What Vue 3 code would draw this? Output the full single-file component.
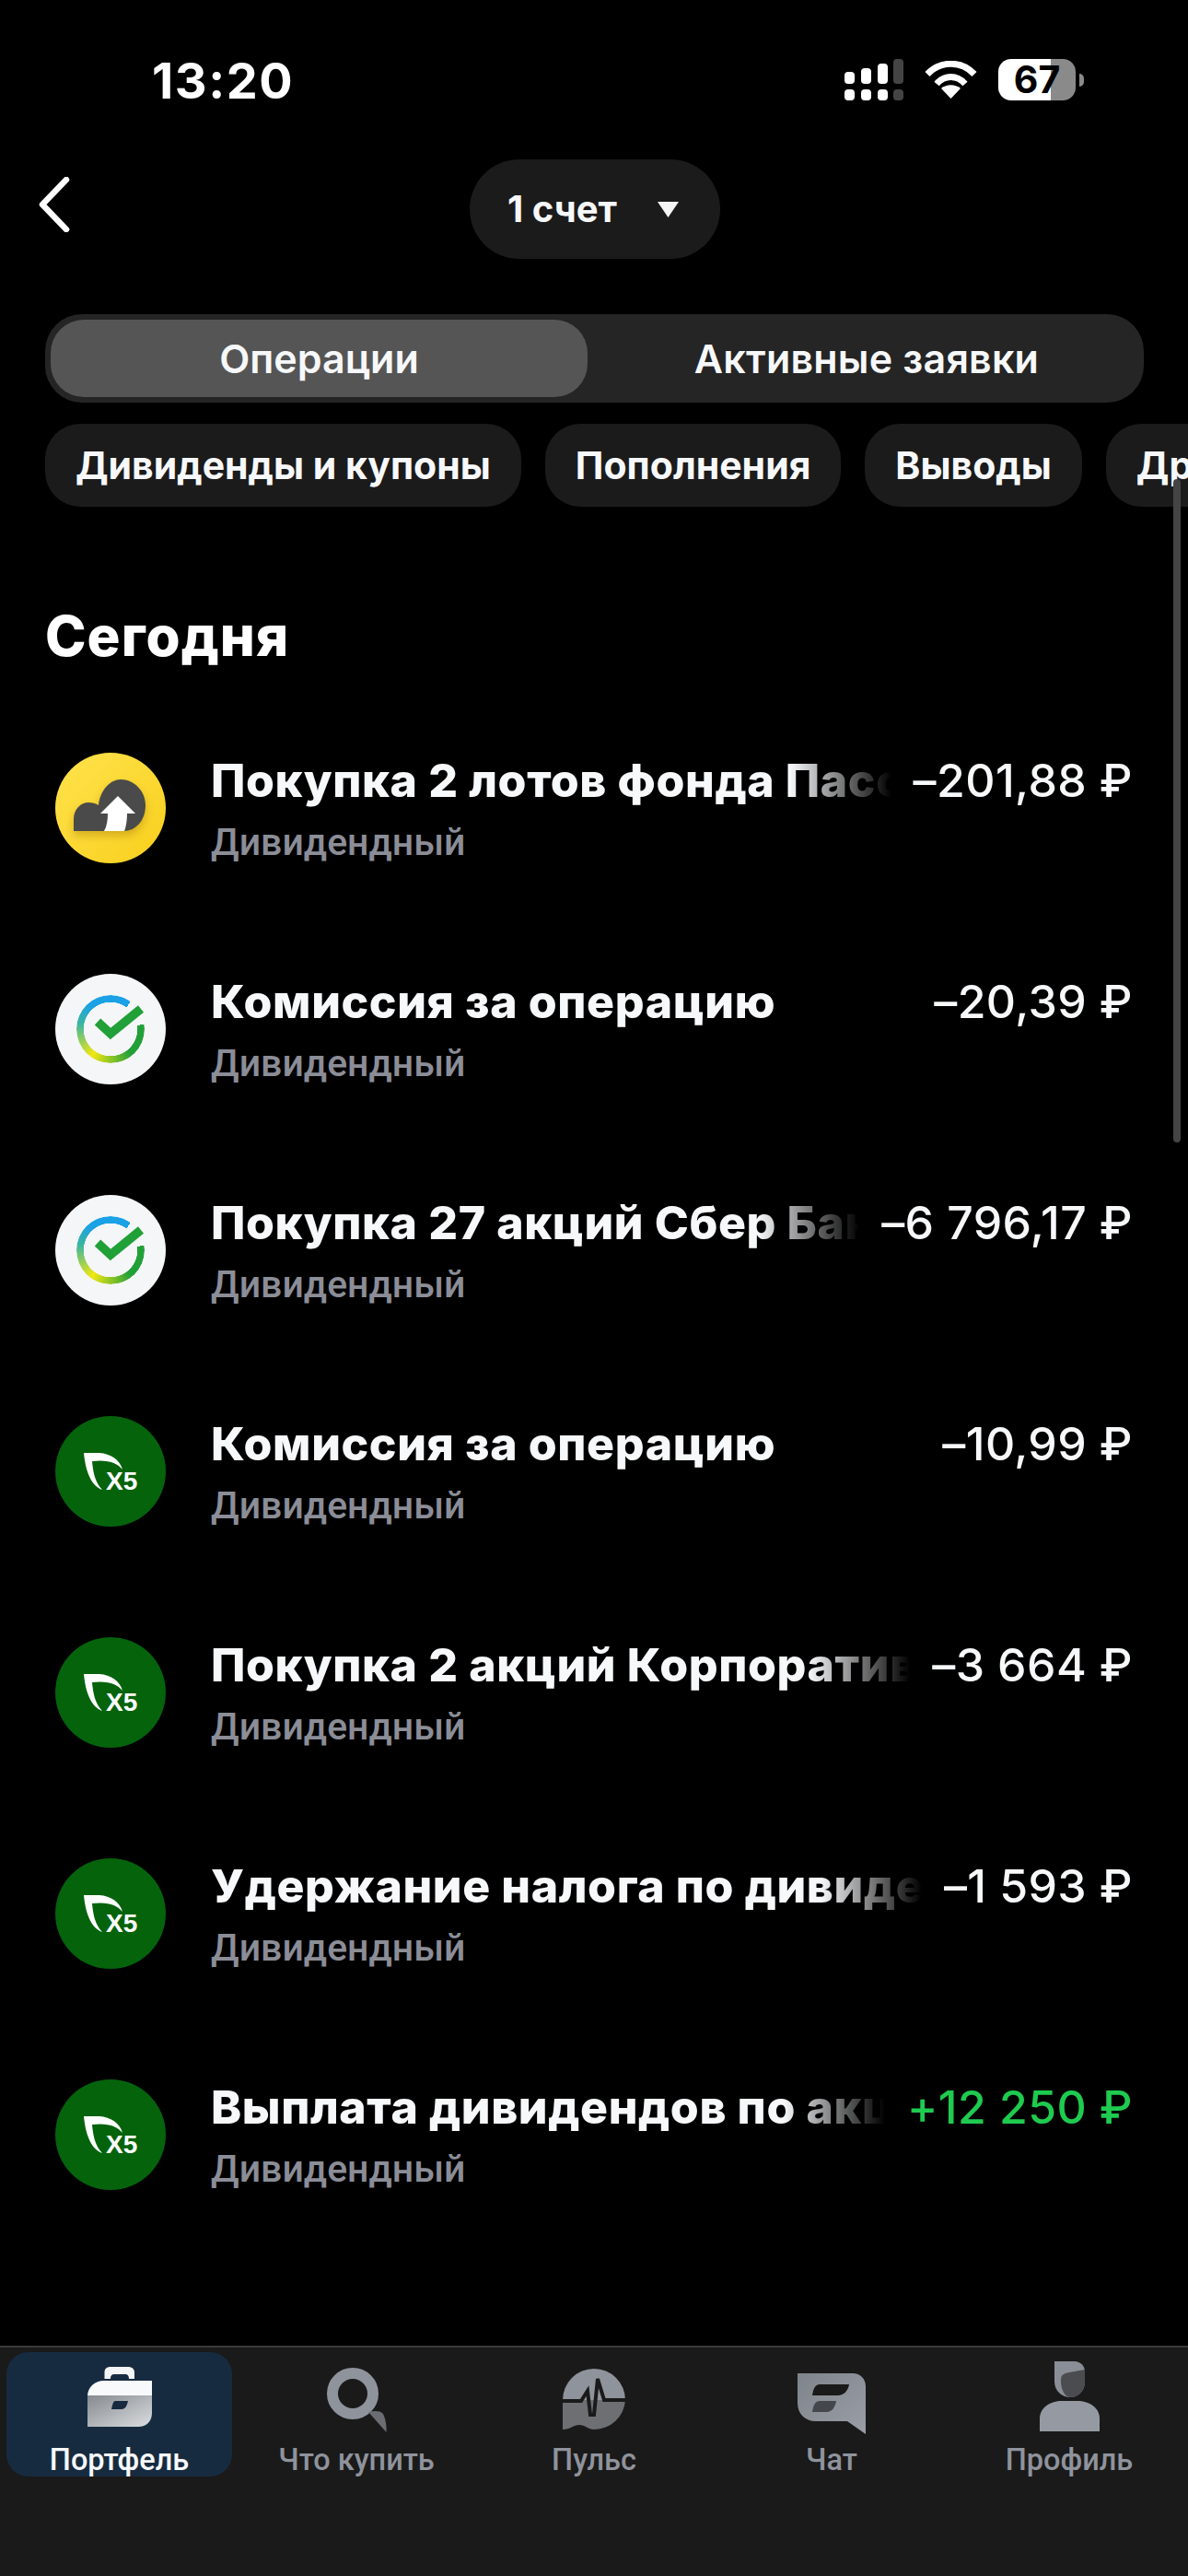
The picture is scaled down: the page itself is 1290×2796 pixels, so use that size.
<script setup>
const chips = ['Дивиденды и купоны', 'Пополнения', 'Выводы', 'Другое']
const rows = [
  { logo: 'cloud', title: 'Покупка 2 лотов фонда Пассивный доход', amount: '–201,88 ₽' },
  { logo: 'sber', title: 'Комиссия за операцию', amount: '–20,39 ₽', full: true },
  { logo: 'sber', title: 'Покупка 27 акций Сбер Банк', amount: '–6 796,17 ₽' },
  { logo: 'x5', title: 'Комиссия за операцию', amount: '–10,99 ₽', full: true },
  { logo: 'x5', title: 'Покупка 2 акций Корпоративный центр', amount: '–3 664 ₽' },
  { logo: 'x5', title: 'Удержание налога по дивидендам', amount: '–1 593 ₽' },
  { logo: 'x5', title: 'Выплата дивидендов по акциям', amount: '+12 250 ₽', plus: true },
]
const tabs = [
  { id: 'case', label: 'Портфель', active: true },
  { id: 'search', label: 'Что купить' },
  { id: 'pulse', label: 'Пульс' },
  { id: 'chat', label: 'Чат' },
  { id: 'user', label: 'Профиль' },
]
</script>

<template>
  <div class="screen">
    <header class="status">
      <span class="time">13:20</span>
      <div class="sys">
        <svg class="signal" width="64" height="45" viewBox="0 0 64 45">
          <g fill="#fff">
            <rect x="0" y="14" width="11" height="13" rx="4" />
            <rect x="18" y="10" width="11" height="17" rx="4" />
            <rect x="36" y="5" width="11" height="22" rx="4" />
            <rect x="0" y="33" width="11" height="12" rx="4" />
            <rect x="18" y="33" width="11" height="12" rx="4" />
            <rect x="36" y="33" width="11" height="12" rx="4" />
          </g>
          <g fill="#444">
            <rect x="53" y="0" width="11" height="27" rx="4" />
            <rect x="53" y="33" width="11" height="12" rx="4" />
          </g>
        </svg>
        <svg class="wifi" width="57" height="41" viewBox="0 0 57 41">
          <path d="M3 14.5C17-.5 40-.5 54 14.5" fill="none" stroke="#fff" stroke-width="7" />
          <path d="M13 25C22 15 35 15 44 25" fill="none" stroke="#fff" stroke-width="7" />
          <path d="M28.5 41L18 30C24 25 33 25 39 30Z" fill="#fff" />
        </svg>
        <div class="battery"><span>67</span></div>
        <i class="nub"></i>
      </div>
    </header>

    <nav class="topnav">
      <svg class="back" width="34" height="60" viewBox="0 0 34 60">
        <path d="M30 3L4 30L30 57" fill="none" stroke="#fff" stroke-width="6.5" stroke-linecap="round" stroke-linejoin="round" />
      </svg>
      <button class="account">
        <span>1 счет</span>
        <svg width="25" height="18" viewBox="0 0 25 18"><path d="M1 1H24L12.5 18Z" fill="#f5f5f5" /></svg>
      </button>
    </nav>

    <div class="segment">
      <div class="seg on">Операции</div>
      <div class="seg rest">Активные заявки</div>
    </div>

    <div class="chips">
      <div v-for="c in chips" :key="c" class="chip">{{ c }}</div>
    </div>

    <h2 class="day">Сегодня</h2>

    <ul class="list">
      <li v-for="(r, i) in rows" :key="i" class="row">
        <div class="logo" :class="r.logo">
          <svg v-if="r.logo === 'cloud'" width="120" height="120" viewBox="0 0 120 120">
            <g class="cloudmark">
              <path d="M20 85V72C20 61 28 54 36 54C40 54 44 55 47 57C49 40 60 29 71 29C86 29 98 42 98 57C98 73 88 85 74 85Z" fill="#4a4a4a" />
              <path d="M68 47L87 66H78C78 73 77 80 75 85H53C56 80 57 73 57 66H49Z" fill="#fff" />
            </g>
          </svg>
          <template v-else-if="r.logo === 'sber'">
            <div class="ring"></div>
            <svg class="tick" width="120" height="120" viewBox="0 0 120 120">
              <path d="M46 52L60 65L93 38" fill="none" stroke="#21a038" stroke-width="9.5" />
            </svg>
          </template>
          <svg v-else width="120" height="120" viewBox="0 0 120 120">
            <path d="M31 40L48 40C60 41 70 47 73 58C67 51 58 47 40 49C41 60 43 72 51 80C40 76 33 62 31 40Z" fill="#fff" />
            <text x="55" y="80" class="x5">X5</text>
          </svg>
        </div>
        <div class="texts">
          <div class="title" :class="{ fade: !r.full }">{{ r.title }}</div>
          <div class="sub">Дивидендный</div>
        </div>
        <div class="amount" :class="{ plus: r.plus }">{{ r.amount }}</div>
      </li>
    </ul>

    <footer class="tabbar">
      <div v-for="t in tabs" :key="t.id" class="tab" :class="[t.id, { active: t.active }]">
        <div class="icon">
          <svg v-if="t.id === 'case'" width="70" height="66" viewBox="0 0 70 66">
            <defs>
              <linearGradient id="caseg" x1="0" y1="0" x2="1" y2="1">
                <stop offset="0" stop-color="#858a90" />
                <stop offset="1" stop-color="#dcdee0" />
              </linearGradient>
            </defs>
            <path d="M18.5 13V6C18.5 2 21 0 25 0H44C48 0 51 2 51 6V13H45C45 9 43 8 41 8H29C27 8 25 9 25 13Z" fill="#f4f5f6" />
            <path d="M0 32C0 22 8 15 18 15H70V31H0Z" fill="#f8f9fa" />
            <path d="M0 31H70V50C70 59 64 65 55 65H0Z" fill="url(#caseg)" />
            <path d="M30 37H44C43 42 41 46 37 46H26C27 41 28 37 30 37Z" fill="#172b40" />
          </svg>
          <svg v-else-if="t.id === 'search'" width="70" height="74" viewBox="0 0 70 74">
            <circle cx="31" cy="30" r="22" fill="none" stroke="#8f939c" stroke-width="12" />
            <path d="M48 50C54 49 60 48 64 52C67 58 68 66 67.500 72Z" fill="#6a6d72" />
          </svg>
          <svg v-else-if="t.id === 'pulse'" width="68" height="68" viewBox="0 0 68 68">
            <path d="M0 36A34 34 0 0 1 68 36Z" fill="#8f939c" />
            <path d="M0 36H68A34 34 0 0 1 34 68C28 68 24 63 18 63C12 63 8 68 0 68Z" fill="#6d6f73" />
            <path d="M0 37H20L27 26L30 52H34L38 13L45 36H68" fill="none" stroke="#1a1a1a" stroke-width="4" />
          </svg>
          <svg v-else-if="t.id === 'chat'" width="74" height="66" viewBox="0 0 74 66">
            <defs>
              <linearGradient id="chatg" x1="0" y1="0" x2="1" y2="1">
                <stop offset="0" stop-color="#7f838a" />
                <stop offset="1" stop-color="#9a9ea6" />
              </linearGradient>
            </defs>
            <path d="M0 0H60C68 0 74 6 74 14V66L54 52H20C8 52 0 44 0 32Z" fill="url(#chatg)" />
            <path d="M24 12H56C55 19 50 24 44 24H16C17 17 19 12 24 12Z" fill="#1a1a1a" />
            <path d="M24 30H42C41 37 37 42 32 42H16C17 35 19 30 24 30Z" fill="#44474b" />
          </svg>
          <svg v-else width="65" height="76" viewBox="0 0 65 76">
            <path d="M16 0H38C44 0 49 5 49 11V22C49 32 42 39 33 39C24 39 16 32 16 22Z" fill="#8a8e96" />
            <path d="M23 22V20C23 14 27 13 32 12L49 9V22C49 32 42 39 33 39C27 39 23 30 23 22Z" fill="#4a4c50" />
            <path d="M0 76V62C0 50 12 43 24 43H41C53 43 65 50 65 62V76Z" fill="#959aa2" />
          </svg>
        </div>
        <span class="label">{{ t.label }}</span>
      </div>
    </footer>

    <div class="scrollbar"></div>
  </div>
</template>

<style scoped>
.screen {
  position: relative;
  width: 1290px;
  height: 2796px;
  overflow: hidden;
  display: flex;
  flex-direction: column;
  background: #000;
  color: #f7f8fa;
  font-family: Inter, "Noto Sans", sans-serif;
}
.status {
  height: 173px;
  flex: none;
  display: flex;
  align-items: flex-start;
  justify-content: space-between;
  padding: 0 113px 0 165px;
}
.time {
  margin-top: 58px;
  font: 700 54px/60px Inter, sans-serif;
  letter-spacing: 1.5px;
  color: #fff;
}
.sys {
  margin-top: 64px;
  display: flex;
  align-items: flex-start;
}
.wifi { margin: 2px 23px 0 23px; }
.battery {
  width: 84px;
  height: 45px;
  border-radius: 14px;
  display: flex;
  align-items: center;
  justify-content: center;
  background: linear-gradient(to right, #fff 57px, #8a8a8a 57px);
  color: #000;
  font: 700 41px/45px Inter, sans-serif;
}
.nub {
  width: 5px;
  height: 14px;
  margin: 16px 0 0 4px;
  border-radius: 0 7px 7px 0;
  background: #8a8a8a;
}
.topnav {
  flex: none;
  display: grid;
  grid-template-columns: 510px 272px;
  height: 108px;
}
.back { align-self: center; margin: 0 0 10px 42px; }
.account {
  border: 0;
  padding: 0 44px 0 41px;
  display: flex;
  align-items: center;
  justify-content: space-between;
  height: 108px;
  border-radius: 54px;
  background: #1b1b1b;
  color: #f7f8fa;
  font: 700 40px/1 Inter, sans-serif;
}
.segment {
  flex: none;
  display: flex;
  margin: 60px 48px 0 49px;
  height: 96px;
  padding: 6px;
  box-sizing: border-box;
  border-radius: 40px;
  background: #252525;
}
.seg {
  flex: 1;
  display: flex;
  align-items: center;
  justify-content: center;
  border-radius: 36px;
  font: 600 43px/1 Inter, sans-serif;
}
.seg.rest { padding-left: 8px; letter-spacing: .2px; }
.seg.on {
  flex: 0 0 583px;
  background: #555;
}
.chips {
  flex: none;
  display: flex;
  gap: 26px;
  margin-top: 23px;
  padding-left: 49px;
  overflow: hidden;
}
.chip {
  flex: none;
  height: 90px;
  padding: 0 33px;
  display: flex;
  align-items: center;
  border-radius: 38px;
  background: #1b1b1b;
  font: 700 41px/1 Inter, sans-serif;
}
.day {
  flex: none;
  margin: 110px 0 0 49px;
  font: 800 60px/60px Inter, sans-serif;
  letter-spacing: 1px;
  color: #fff;
}
.list {
  flex: none;
  list-style: none;
  margin: 97px 0 0;
  padding: 0;
}
.row {
  height: 240px;
  box-sizing: border-box;
  padding: 0 60px;
  display: flex;
  align-items: flex-start;
  gap: 24px;
}
.logo {
  position: relative;
  flex: none;
  width: 120px;
  height: 120px;
  margin-right: 25px;
  border-radius: 50%;
  overflow: hidden;
}
.logo svg { display: block; }
.cloud { background: linear-gradient(135deg, #ffe34d, #f8cf1c); }
.cloudmark { filter: drop-shadow(0 5px 5px rgba(140, 95, 0, .35)); }
.sber { background: #f5f6f7; }
.x5 { background: #05630c; }
.ring {
  position: absolute;
  left: 23px;
  top: 23px;
  width: 74px;
  height: 74px;
  border-radius: 50%;
  background: conic-gradient(#1ba1e6 0 36deg, transparent 36deg 82deg, #21a038 82deg 140deg, #f1e813 215deg, #3ab5a0 280deg, #1ba1e6 320deg);
  -webkit-mask: radial-gradient(closest-side, transparent calc(100% - 8px), #000 calc(100% - 7.5px));
  mask: radial-gradient(closest-side, transparent calc(100% - 8px), #000 calc(100% - 7.5px));
}
.tick { position: absolute; left: 0; top: 0; }
text.x5 {
  font: 700 28px "Liberation Sans", sans-serif;
  fill: #fff;
}
.texts {
  flex: 1;
  min-width: 0;
  margin-top: -2px;
}
.title {
  white-space: nowrap;
  overflow: hidden;
  font: 800 50px/64px Inter, sans-serif;
  letter-spacing: .6px;
}
.title.fade {
  -webkit-mask-image: linear-gradient(to right, #000 calc(100% - 110px), transparent);
  mask-image: linear-gradient(to right, #000 calc(100% - 110px), transparent);
}
.sub {
  margin-top: 10px;
  font: 500 41px/50px Roboto, sans-serif;
  color: #8b8d97;
}
.amount {
  flex: none;
  margin-top: -2px;
  font: 500 50px/64px Inter, sans-serif;
  letter-spacing: .4px;
  white-space: nowrap;
}
.amount.plus { color: #1ecb4f; }
.tabbar {
  margin-top: auto;
  height: 250px;
  box-sizing: border-box;
  flex: none;
  border-top: 2px solid #38393b;
  background: #1a1a1a;
  display: flex;
  padding: 5px 7px 0;
}
.tab {
  flex: 0 0 258px;
  height: 135px;
  box-sizing: border-box;
  display: flex;
  flex-direction: column;
  align-items: center;
  color: #8f939c;
}
.tab.case { flex-basis: 245px; margin-right: 6px; }
.tab.active {
  background: #172b40;
  border-radius: 24px;
  color: #f7f8fa;
}
.icon {
  height: 99px;
  display: flex;
  justify-content: center;
}
.icon svg { display: block; }
.case svg { margin-top: 16px; }
.search svg { margin-top: 15px; }
.pulse svg { margin-top: 16px; }
.chat svg { margin-top: 23px; }
.user svg { margin-top: 10px; }
.label {
  font: 500 32.5px/36px Roboto, sans-serif;
}
.scrollbar {
  position: absolute;
  left: 1274px;
  top: 520px;
  width: 8px;
  height: 720px;
  border-radius: 4px;
  background: #444;
}
</style>

<style>
html, body { background: #000; }
</style>
